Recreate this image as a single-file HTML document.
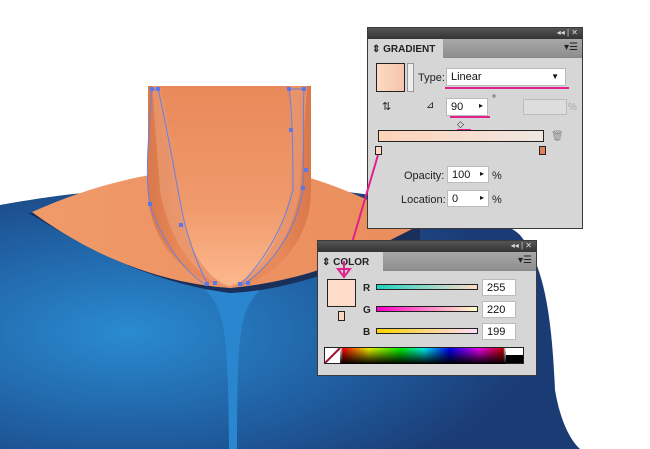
<!DOCTYPE html>
<html><head><meta charset="utf-8"><style>
*{margin:0;padding:0;box-sizing:border-box}
body{width:650px;height:449px;overflow:hidden;background:#fff;font-family:"Liberation Sans",sans-serif;position:relative}
.p{position:absolute;background:#d6d6d6;border:1px solid #3a3a3a}
.tb{position:absolute;left:0;right:0;top:0;height:11px;background:linear-gradient(#555,#333)}
.tr{position:absolute;left:0;right:0;top:11px;height:19px;background:linear-gradient(#a8a8a8,#8e8e8e);border-bottom:1px solid #888}
.tab{position:absolute;left:0;top:0;height:19px;background:#d6d6d6;font-size:10px;font-weight:bold;color:#222;padding:5px 0 0 4px}
.ab{position:absolute;font-size:10px;color:#222}
.in{position:absolute;background:#fff;border:1px solid #bbb;font-size:10px;padding:2px 4px;color:#111}
.ctl{position:absolute;color:#ddd;font-size:8px}
</style></head><body>
<svg width="650" height="449" style="position:absolute;left:0;top:0">
<defs>
<radialGradient id="bl" cx="0.22" cy="0.55" r="0.7"><stop offset="0" stop-color="#2a8bd0"/><stop offset="0.6" stop-color="#1f5c9e"/><stop offset="1" stop-color="#1b3b74"/></radialGradient>
<linearGradient id="nk" x1="0" x2="1"><stop offset="0" stop-color="#d9784a"/><stop offset="0.2" stop-color="#e8895a"/><stop offset="0.8" stop-color="#e8895a"/><stop offset="1" stop-color="#d9784a"/></linearGradient>
<linearGradient id="nv" x1="0" y1="0" x2="0" y2="1"><stop offset="0" stop-color="#e9895a"/><stop offset="0.6" stop-color="#f09a6b"/><stop offset="1" stop-color="#fcb88d"/></linearGradient>
<linearGradient id="cl" x1="0" x2="1"><stop offset="0" stop-color="#f09a6a"/><stop offset="1" stop-color="#ea8d5c"/></linearGradient>
</defs>
<path d="M0,205 C40,198 90,190 140,190 L330,190 C420,200 500,215 520,235 C545,265 552,320 555,390 C560,420 570,440 580,449 L0,449 Z" fill="url(#bl)"/>
<path d="M205,290 C225,310 228,330 229,449 L237,449 C237,330 240,310 260,290 Z" fill="#2a86cf"/>
<path d="M28,213 C60,230 130,280 230,293 C300,290 360,260 420,240 L420,225 L150,210 Z" fill="#1a2f5a"/>
<path d="M32,212 C70,195 110,182 150,175 L310,178 C350,190 390,210 420,225 C380,245 320,280 230,288 C140,282 70,240 32,212 Z" fill="url(#cl)"/>
<path d="M148,86 L311,86 L311,190 C311,240 275,282 230,288 C185,282 148,240 148,190 Z" fill="url(#nk)"/>
<path d="M152,86 L307,86 L300,190 C292,240 262,282 230,288 C198,282 168,240 160,190 Z" fill="#eda07a" opacity="0.6"/>
<path d="M160,86 L290,86 L290,190 C284,240 255,280 230,286 C205,280 183,240 180,200 C176,160 168,120 160,86 Z" fill="url(#nv)"/>
<g fill="none" stroke="#6a7fe0" stroke-width="1">
<path d="M152,89 L158,89 C170,140 178,195 185,225 C195,260 205,280 208,284"/>
<path d="M152,89 C148,140 145,180 150,205 C165,250 190,275 205,284"/>
<path d="M289,89 L304,89 C302,140 305,180 303,190 C295,240 260,275 242,285"/>
<path d="M289,89 C292,110 293,150 293,190 C280,240 255,270 240,285"/>
</g>
<g fill="#5a78e8"><rect x="150" y="87" width="4" height="4"/><rect x="156" y="87" width="4" height="4"/><rect x="287" y="87" width="4" height="4"/><rect x="302" y="87" width="4" height="4"/><rect x="289" y="128" width="4" height="4"/><rect x="148" y="202" width="4" height="4"/><rect x="179" y="223" width="4" height="4"/><rect x="304" y="168" width="4" height="4"/><rect x="301" y="186" width="4" height="4"/><rect x="205" y="282" width="4" height="4"/><rect x="213" y="281" width="4" height="4"/><rect x="238" y="282" width="4" height="4"/><rect x="246" y="281" width="4" height="4"/></g>
</svg>

<div class="p" style="left:367px;top:27px;width:216px;height:202px">
<div class="tb"><span class="ctl" style="right:4px;top:0">◂◂ | ✕</span></div>
<div class="tr"><div class="tab" style="width:75px">⇕ GRADIENT</div><span style="position:absolute;right:4px;top:3px;font-size:10px;color:#222">▾☰</span></div>
<div style="position:absolute;left:8px;top:35px;width:29px;height:29px;border:1px solid #222;background:linear-gradient(90deg,#fdd9c3,#f3c6ac)"></div>
<div style="position:absolute;left:39px;top:35px;width:7px;height:29px;background:#eee;border:1px solid #999"></div>
<div class="ab" style="left:50px;top:44px;font-size:11px">Type:</div>
<div class="in" style="left:78px;top:40px;width:120px;height:18px;font-size:11px">Linear<span style="position:absolute;right:6px;top:3px;font-size:8px">▼</span></div>
<div style="position:absolute;left:77px;top:59px;width:124px;height:2px;background:#e0208c"></div>
<div class="ab" style="left:14px;top:72px;font-size:11px">⇅</div>
<div class="ab" style="left:58px;top:72px">⊿</div>
<div class="in" style="left:78px;top:70px;width:42px;height:18px;font-size:11px">90<span style="position:absolute;right:4px;top:2px;font-size:8px">▸</span></div>
<div style="position:absolute;left:82px;top:88px;width:40px;height:2px;background:#e0208c"></div>
<div class="ab" style="left:124px;top:66px">°</div>
<div style="position:absolute;left:155px;top:71px;width:44px;height:16px;background:#ddd;border:1px solid #bbb"></div>
<div class="ab" style="left:200px;top:74px;color:#aaa">%</div>
<div class="ab" style="left:89px;top:91px;font-size:9px">◇</div>
<div style="position:absolute;left:89px;top:101px;width:14px;height:2px;background:#e0208c"></div>
<div style="position:absolute;left:10px;top:102px;width:166px;height:12px;border:1px solid #222;background:linear-gradient(90deg,#fdd3b9,#f0e6e2)"></div>
<div class="ab" style="left:183px;top:103px;color:#888">🗑</div>
<div style="position:absolute;left:7px;top:118px;width:7px;height:9px;background:#fcd8c1;border:1px solid #222"></div>
<div style="position:absolute;left:171px;top:118px;width:7px;height:9px;background:#e0805a;border:1px solid #222"></div>
<div class="ab" style="left:36px;top:142px;font-size:11px">Opacity:</div>
<div class="in" style="left:79px;top:138px;width:42px;height:17px;font-size:11px">100<span style="position:absolute;right:4px;top:2px;font-size:8px">▸</span></div>
<div class="ab" style="left:124px;top:142px;font-size:11px">%</div>
<div class="ab" style="left:33px;top:166px;font-size:11px">Location:</div>
<div class="in" style="left:79px;top:162px;width:42px;height:17px;font-size:11px">0<span style="position:absolute;right:4px;top:2px;font-size:8px">▸</span></div>
<div class="ab" style="left:124px;top:166px;font-size:11px">%</div>
</div>

<svg width="650" height="449" style="position:absolute;left:0;top:0;pointer-events:none">
<path d="M378,155 L344,270" stroke="#e0208c" stroke-width="2" fill="none"/>
</svg>

<div class="p" style="left:317px;top:240px;width:220px;height:136px">
<div class="tb"><span class="ctl" style="right:4px;top:0">◂◂ | ✕</span></div>
<div class="tr"><div class="tab" style="width:65px">⇕ COLOR</div><span style="position:absolute;right:4px;top:3px;font-size:10px;color:#222">▾☰</span></div>
<div style="position:absolute;left:9px;top:38px;width:29px;height:28px;background:#ffdcc7;border:1px solid #222"></div>
<div style="position:absolute;left:20px;top:70px;width:7px;height:10px;background:#fcd8c1;border:1px solid #222"></div>
<svg width="30" height="30" style="position:absolute;left:14px;top:20px"><path d="M12,0 L12,14 M6,8 L12,16 L18,8 Z" stroke="#e0208c" stroke-width="2" fill="none"/></svg>
<div class="ab" style="left:45px;top:42px;font-weight:bold">R</div>
<div style="position:absolute;left:58px;top:43px;width:102px;height:6px;border:1px solid #222;background:linear-gradient(90deg,#1ed2c4,#ffdcc7)"></div>
<div class="in" style="left:164px;top:38px;width:34px;height:17px;font-size:11px">255</div>
<div class="ab" style="left:45px;top:64px;font-weight:bold">G</div>
<div style="position:absolute;left:58px;top:65px;width:102px;height:6px;border:1px solid #222;background:linear-gradient(90deg,#ff00c7,#ffffc7)"></div>
<div class="in" style="left:164px;top:60px;width:34px;height:17px;font-size:11px">220</div>
<div class="ab" style="left:45px;top:86px;font-weight:bold">B</div>
<div style="position:absolute;left:58px;top:87px;width:102px;height:6px;border:1px solid #222;background:linear-gradient(90deg,#ffd400,#ffdcff)"></div>
<div class="in" style="left:164px;top:82px;width:34px;height:17px;font-size:11px">199</div>
<div style="position:absolute;left:6px;top:106px;width:200px;height:17px;border:1px solid #222;background:linear-gradient(90deg,#fff 0,#fff 8%,red 9%,#ff0 22%,#0f0 38%,#0ff 50%,#00f 63%,#f0f 78%,#c00 90%,#fff 91%)"></div>
<div style="position:absolute;left:22px;top:106px;width:166px;height:17px;background:linear-gradient(transparent,#000)"></div>
<div style="position:absolute;left:188px;top:114px;width:17px;height:8px;background:#000"></div>
<svg width="16" height="16" style="position:absolute;left:7px;top:107px"><path d="M0,15 L15,0" stroke="#a01030" stroke-width="2"/></svg>
</div>
</body></html>
